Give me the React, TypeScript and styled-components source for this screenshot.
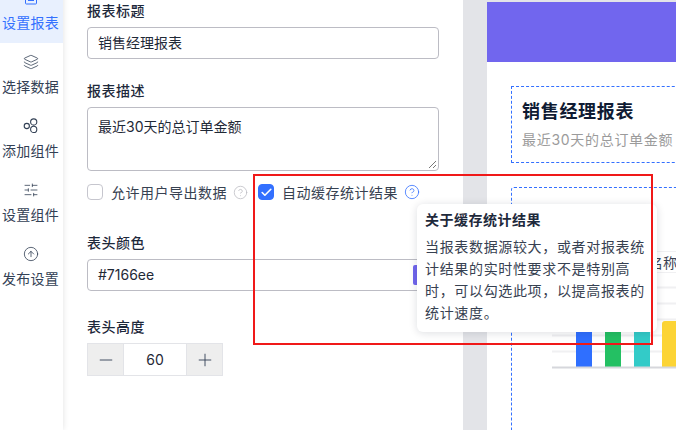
import React from "react";
import styled, { createGlobalStyle } from "styled-components";
import { Layers, SlidersHorizontal, CircleArrowUp, CircleHelp, Minus, Plus, Check } from "lucide-react";

const Global = createGlobalStyle`
  html, body { margin: 0; padding: 0; width: 676px; height: 430px; overflow: hidden; background: #fff; }
  * { box-sizing: border-box; }
  body { font-family: "Inter", "Noto Sans CJK SC", sans-serif; color: #1f2937; }
`;

const Page = styled.div`
  position: relative;
  display: flex;
  width: 676px;
  height: 430px;
  overflow: hidden;
`;

const Sidebar = styled.nav`
  flex: 0 0 63px;
  margin-top: -21px;
  height: 451px;
  background: #fff;
  box-shadow: 0 0 6px rgba(0, 0, 0, 0.12);
  z-index: 1;
`;

const NavItem = styled.div<{ $active?: boolean }>`
  height: 64px;
  padding: 11px 2px 0 0;
  display: flex;
  flex-direction: column;
  align-items: center;
  color: ${(p) => (p.$active ? "#3370ff" : "#334155")};
  background: ${(p) => (p.$active ? "#e8f0fe" : "transparent")};
`;

const NavIcon = styled.span`
  width: 16px;
  height: 16px;
  margin-bottom: 6px;
  display: flex;
  align-items: center;
  justify-content: center;
`;

const NavLabel = styled.span`
  font-size: 14px;
  line-height: 22px;
  letter-spacing: 0.3px;
  white-space: nowrap;
`;

const FormPane = styled.section`
  flex: 0 0 400px;
  padding: 0 24px;
  background: #fff;
`;

const Label = styled.div<{ $gap?: number }>`
  font-size: 14px;
  line-height: 22px;
  font-weight: 500;
  letter-spacing: 0.5px;
  color: #1e293b;
  margin-top: ${(p) => p.$gap ?? 0}px;
  margin-bottom: 5px;
`;

const InputBox = styled.div`
  position: relative;
  height: 32px;
  border: 1px solid #bcbcc4;
  border-radius: 4px;
  padding: 0 10px;
  font-size: 14px;
  line-height: 30px;
  color: #1f2937;
`;

const AreaBox = styled.div`
  position: relative;
  height: 64px;
  border: 1px solid #bcbcc4;
  border-radius: 4px;
  padding: 8px 10px;
  font-size: 14px;
  line-height: 22px;
  color: #1f2937;
`;

const Resize = styled.svg`
  position: absolute;
  right: 1px;
  bottom: 1px;
`;

const Swatch = styled.span`
  position: absolute;
  right: 4px;
  top: 5px;
  width: 21px;
  height: 20px;
  background: #7166ee;
  border-radius: 2px;
`;

const CheckRow = styled.div`
  display: flex;
  align-items: center;
  height: 16px;
  margin-top: 13px;
`;

const Box = styled.span<{ $on?: boolean }>`
  width: 16px;
  height: 16px;
  border-radius: 4px;
  border: 1px solid ${(p) => (p.$on ? "#3370ff" : "#c6c6ce")};
  background: ${(p) => (p.$on ? "#3370ff" : "#fff")};
  display: flex;
  align-items: center;
  justify-content: center;
  color: #fff;
  flex: none;
`;

const CheckText = styled.span`
  margin-left: 8px;
  font-size: 14px;
  letter-spacing: 0.5px;
  color: #374151;
  white-space: nowrap;
`;

const Help = styled.span<{ $on?: boolean; $right: number }>`
  display: flex;
  margin-left: 6px;
  margin-right: ${(p) => p.$right}px;
  color: ${(p) => (p.$on ? "#3370ff" : "#b9b9c0")};
`;

const Stepper = styled.div`
  display: flex;
  width: 136px;
  height: 33px;
  border: 1px solid #e3e4e8;
`;

const StepBtn = styled.span`
  flex: 0 0 35px;
  background: #eee;
  display: flex;
  align-items: center;
  justify-content: center;
  color: #334155;
`;

const StepValue = styled.span`
  flex: 1;
  border-left: 1px solid #e3e4e8;
  border-right: 1px solid #e3e4e8;
  text-align: center;
  font-size: 14px;
  line-height: 31px;
  color: #1f2937;
`;

const Gutter = styled.main`
  flex: 1;
  background: #e3e4e8;
  padding: 2px 0 0 24px;
  min-width: 0;
`;

const Preview = styled.div`
  width: 500px;
  height: 430px;
  background: #fff;
`;

const Banner = styled.div`
  height: 60px;
  background: #7166ee;
`;

const TitleCard = styled.div`
  width: 420px;
  height: 77px;
  margin: 24px 0 0 24px;
  padding: 12px 10px;
  border: 1px dashed #3370ff;
`;

const CardTitle = styled.div`
  font-size: 18px;
  line-height: 26px;
  font-weight: 600;
  letter-spacing: 0.7px;
  color: #0f1b33;
`;

const CardSub = styled.div`
  margin-top: 4px;
  font-size: 14px;
  line-height: 22px;
  letter-spacing: 0.7px;
  color: #9b9b9b;
`;

const ChartCard = styled.div`
  width: 420px;
  height: 300px;
  margin: 24px 0 0 24px;
  border: 1px dashed #3370ff;
  border-radius: 3px;
  padding-top: 63px;
`;

const ChartHead = styled.div`
  height: 22px;
  margin-left: 40px;
  padding-left: 69px;
  font-size: 14px;
  line-height: 22px;
  color: #374151;
  white-space: nowrap;
  border-top: 1px solid #f0f0f2;
  border-bottom: 1px solid #f0f0f2;
`;

const ChartSvg = styled.svg`
  display: block;
  margin-left: 40px;
`;

const Tooltip = styled.div`
  position: absolute;
  left: 417px;
  top: 204px;
  width: 240px;
  height: 128px;
  padding: 5px 8px;
  background: #fff;
  border-radius: 6px;
  box-shadow: 0 1px 8px rgba(15, 23, 42, 0.14);
  z-index: 2;
`;

const TipTitle = styled.div`
  font-size: 14px;
  line-height: 22px;
  font-weight: 600;
  letter-spacing: 0.5px;
  color: #1e293b;
  margin-bottom: 5px;
`;

const TipBody = styled.div`
  font-size: 14px;
  line-height: 22px;
  letter-spacing: 0.66px;
  color: #374151;
`;

const Annotation = styled.div`
  position: absolute;
  left: 253px;
  top: 174px;
  width: 400px;
  height: 171px;
  border: 2px solid #f01919;
  z-index: 3;
  pointer-events: none;
`;

const ReportIcon = () => (
  <svg width="16" height="16" viewBox="0 0 16 16" fill="none" stroke="currentColor" strokeWidth="1">
    <rect x="2.5" y="2" width="11" height="12" rx="0.8" />
    <path d="M5 7h6M5 10.5h6" />
  </svg>
);

const NodesIcon = () => (
  <svg width="16" height="16" viewBox="0 0 16 16" fill="none" stroke="currentColor" strokeWidth="1.1">
    <circle cx="3.8" cy="8" r="2.6" />
    <circle cx="10.7" cy="4" r="3.1" />
    <circle cx="10.7" cy="11.4" r="3.1" />
  </svg>
);

const nav = [
  { label: "设置报表", icon: <ReportIcon />, active: true },
  { label: "选择数据", icon: <Layers size={16} strokeWidth={1.2} /> },
  { label: "添加组件", icon: <NodesIcon /> },
  { label: "设置组件", icon: <SlidersHorizontal size={16} strokeWidth={1.2} /> },
  { label: "发布设置", icon: <CircleArrowUp size={16} strokeWidth={1.2} /> },
];

const grid = [271.5, 287.5, 303.5, 319.5, 335.5, 351.5];
const bars = [
  { x: 576, top: 300, fill: "#2f6fff" },
  { x: 605, top: 300, fill: "#24c063" },
  { x: 634, top: 300, fill: "#33cbc8" },
  { x: 662, top: 321, fill: "#fcd435" },
];

export default function App() {
  return (
    <Page>
      <Global />
      <Sidebar>
        {nav.map((n) => (
          <NavItem key={n.label} $active={n.active}>
            <NavIcon>{n.icon}</NavIcon>
            <NavLabel>{n.label}</NavLabel>
          </NavItem>
        ))}
      </Sidebar>

      <FormPane>
        <Label>报表标题</Label>
        <InputBox>销售经理报表</InputBox>
        <Label $gap={21}>报表描述</Label>
        <AreaBox>
          最近30天的总订单金额
          <Resize width="9" height="9" viewBox="0 0 9 9" stroke="#555" strokeWidth="0.8">
            <path d="M1 8L8 1M5 8L8 5" />
          </Resize>
        </AreaBox>
        <CheckRow>
          <Box />
          <CheckText>允许用户导出数据</CheckText>
          <Help $right={10}>
            <CircleHelp size={15} strokeWidth={1.2} />
          </Help>
          <Box $on>
            <Check size={13} strokeWidth={3} />
          </Box>
          <CheckText>自动缓存统计结果</CheckText>
          <Help $on $right={0}>
            <CircleHelp size={16} strokeWidth={1.2} />
          </Help>
        </CheckRow>
        <Label $gap={32}>表头颜色</Label>
        <InputBox>
          #7166ee
          <Swatch />
        </InputBox>
        <Label $gap={25}>表头高度</Label>
        <Stepper>
          <StepBtn>
            <Minus size={20} strokeWidth={1.1} />
          </StepBtn>
          <StepValue>60</StepValue>
          <StepBtn>
            <Plus size={20} strokeWidth={1.1} />
          </StepBtn>
        </Stepper>
      </FormPane>

      <Gutter>
        <Preview>
          <Banner />
          <TitleCard>
            <CardTitle>销售经理报表</CardTitle>
            <CardSub>最近30天的总订单金额</CardSub>
          </TitleCard>
          <ChartCard>
            <ChartHead>图表名称</ChartHead>
            <ChartSvg width="130" height="96" viewBox="552 273 130 96">
              {grid.map((y) => (
                <line key={y} x1="552" x2="682" y1={y} y2={y} stroke="#f0f0f2" strokeWidth="2" />
              ))}
              {bars.map((b) => (
                <path
                  key={b.x}
                  d={`M${b.x} 367V${b.top + 3}Q${b.x} ${b.top} ${b.x + 3} ${b.top}H${b.x + 13}Q${b.x + 16} ${b.top} ${b.x + 16} ${b.top + 3}V367Z`}
                  fill={b.fill}
                />
              ))}
              <line x1="552" x2="682" y1="367.5" y2="367.5" stroke="#d6d7dc" strokeWidth="2" />
            </ChartSvg>
          </ChartCard>
        </Preview>
      </Gutter>

      <Tooltip>
        <TipTitle>关于缓存统计结果</TipTitle>
        <TipBody>当报表数据源较大，或者对报表统计结果的实时性要求不是特别高时，可以勾选此项，以提高报表的统计速度。</TipBody>
      </Tooltip>
      <Annotation />
    </Page>
  );
}
